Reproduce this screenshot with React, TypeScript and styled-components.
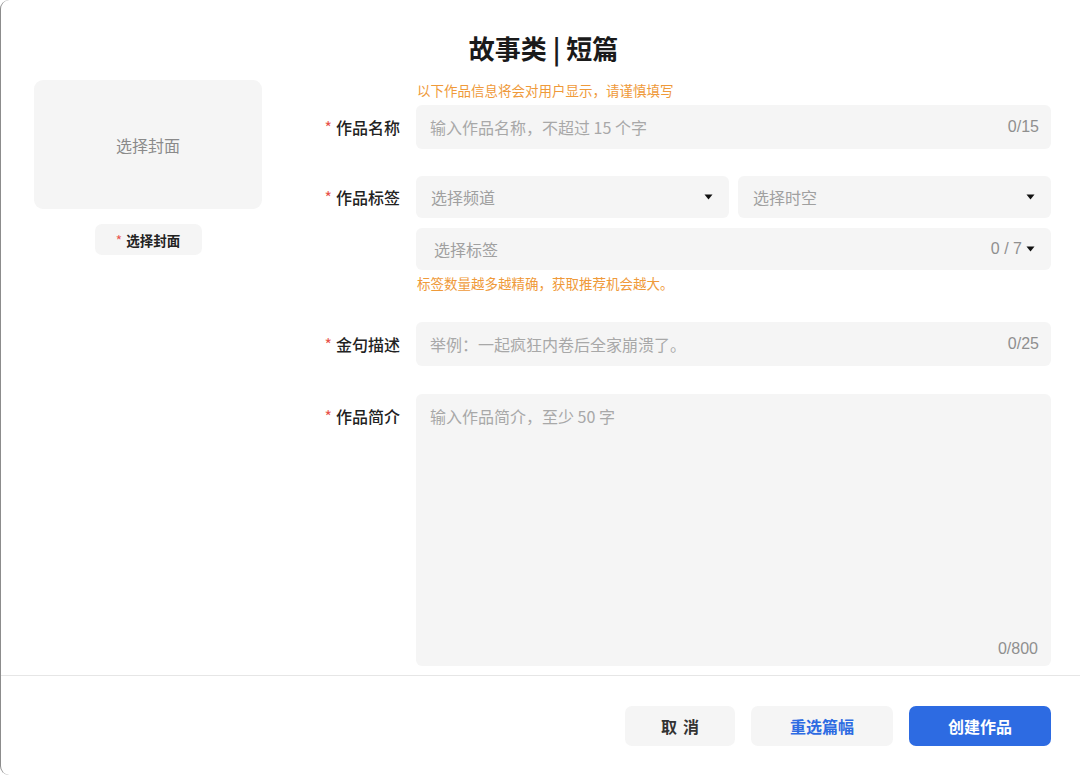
import React from "react";
import styled, { createGlobalStyle } from "styled-components";

const Global = createGlobalStyle`
  html, body { margin: 0; padding: 0; height: 100%; overflow: hidden; background: #fff; }
  body { font-family: "Noto Sans CJK SC", "Noto Sans", "Liberation Sans", sans-serif; color: #222; }
  #root { height: 100%; }
  * { box-sizing: border-box; }
`;

const Modal = styled.div`
  height: 775px;
  width: 1080px;
  background: #fff;
  border-left: 1.5px solid #8c8c8c;
  border-radius: 9px 0 0 9px;
  display: flex;
  flex-direction: column;
`;

const Title = styled.h1`
  margin: 0;
  padding-top: 29px;
  height: 80px;
  text-align: center;
  font-size: 26px;
  line-height: 38px;
  font-weight: 700;
  color: #1a1a1a;
  padding-left: 6px;
`;

const Body = styled.div`
  display: grid;
  grid-template-columns: 228px 1fr;
  padding: 0 29px 0 33px;
  height: 594px;
`;

const CoverCol = styled.div`
  display: flex;
  flex-direction: column;
  align-items: center;
`;

const CoverBox = styled.div`
  width: 228px;
  height: 129px;
  background: #f5f5f5;
  border-radius: 9px;
  display: flex;
  align-items: center;
  justify-content: center;
  font-size: 16px;
  color: #8a8a8a;
`;

const CoverButton = styled.button`
  margin-top: 15px;
  width: 107px;
  height: 31px;
  border: none;
  background: #f5f5f5;
  border-radius: 7px;
  font-family: inherit;
  font-size: 13.5px;
  font-weight: 700;
  color: #222;
  display: flex;
  align-items: center;
  justify-content: center;
  padding: 0;
`;

const Star = styled.span`
  color: #e8534a;
  font-weight: 400;
  margin-right: 4px;
`;

const Form = styled.div`
  display: grid;
  grid-template-columns: 138px 635px;
  column-gap: 16px;
  align-content: start;
`;

const Hint = styled.div<{ $top?: number; $bottom?: number }>`
  grid-column: 2;
  font-size: 13.5px;
  line-height: 18px;
  color: #ef9a3a;
  padding-left: 1px;
  margin-top: ${(p) => p.$top ?? 0}px;
  margin-bottom: ${(p) => p.$bottom ?? 0}px;
`;

const Label = styled.div<{ $top?: number }>`
  grid-column: 1;
  text-align: right;
  font-size: 16px;
  line-height: 44px;
  height: 44px;
  font-weight: 500;
  color: #222;
  margin-top: ${(p) => p.$top ?? 0}px;
`;

const Control = styled.div<{ $top?: number }>`
  grid-column: 2;
  margin-top: ${(p) => p.$top ?? 0}px;
`;

const InputBox = styled.div`
  height: 44px;
  background: #f5f5f5;
  border-radius: 6px;
  display: flex;
  align-items: center;
  padding: 0 12px 0 14px;
`;

const TextInput = styled.input`
  flex: 1;
  border: none;
  outline: none;
  background: transparent;
  font-family: inherit;
  font-size: 16px;
  color: #222;
  padding: 0;
  &::placeholder { color: #a8a8a8; }
`;

const Counter = styled.span`
  font-size: 16px;
  color: #8f8f8f;
  font-family: "Liberation Sans", "Noto Sans", sans-serif;
`;

const SelectRow = styled.div`
  display: grid;
  grid-template-columns: 1fr 1fr;
  gap: 9px;
`;

const Select = styled.div<{ $pad?: number }>`
  height: 42px;
  background: #f5f5f5;
  border-radius: 6px;
  display: flex;
  align-items: center;
  padding: 0 16px 0 ${(p) => p.$pad ?? 15}px;
  font-size: 16px;
  color: #a0a0a0;
  gap: 4px;
`;

const SelectText = styled.span`
  flex: 1;
`;

const TagSelect = styled(Select)`
  margin-top: 10px;
`;

const AreaBox = styled.div`
  height: 272px;
  background: #f5f5f5;
  border-radius: 6px;
  display: flex;
  flex-direction: column;
  padding: 10px 13px 6px 14px;
`;

const TextArea = styled.textarea`
  flex: 1;
  border: none;
  outline: none;
  resize: none;
  background: transparent;
  font-family: inherit;
  font-size: 16px;
  line-height: 24px;
  padding: 0;
  color: #222;
  &::placeholder { color: #a8a8a8; }
`;

const AreaFooter = styled.div`
  display: flex;
  justify-content: flex-end;
  line-height: 22px;
`;

const Divider = styled.div`
  height: 1px;
  background: #e6e6e6;
  margin-top: 1px;
`;

const Footer = styled.div`
  display: flex;
  justify-content: flex-end;
  gap: 16px;
  padding: 30px 29px 0 0;
`;

const Button = styled.button<{ $variant: "plain" | "soft" | "primary"; $w: number }>`
  width: ${(p) => p.$w}px;
  height: 40px;
  border: none;
  border-radius: 7px;
  font-family: inherit;
  font-size: 16px;
  font-weight: 700;
  letter-spacing: ${(p) => (p.$variant === "plain" ? "6px" : "0")};
  text-indent: ${(p) => (p.$variant === "plain" ? "6px" : "0")};
  background: ${(p) => (p.$variant === "primary" ? "#2d6be2" : "#f5f5f5")};
  color: ${(p) => (p.$variant === "primary" ? "#fff" : p.$variant === "soft" ? "#2d6be2" : "#333")};
`;

const Caret = () => (
  <svg width="9" height="6" viewBox="0 0 9 6">
    <path d="M0.5 0.5 H8.5 L4.5 5.5 Z" fill="#111" />
  </svg>
);

const Req: React.FC<{ children: React.ReactNode }> = ({ children }) => (
  <>
    <Star>*</Star>
    {children}
  </>
);

export default function App() {
  return (
    <>
      <Global />
      <Modal>
        <Title>故事类 | 短篇</Title>
        <Body>
          <CoverCol>
            <CoverBox>选择封面</CoverBox>
            <CoverButton>
              <Star>*</Star>选择封面
            </CoverButton>
          </CoverCol>
          <Form>
            <Hint $top={1} $bottom={6}>以下作品信息将会对用户显示，请谨慎填写</Hint>

            <Label><Req>作品名称</Req></Label>
            <Control>
              <InputBox>
                <TextInput placeholder="输入作品名称，不超过 15 个字" />
                <Counter>0/15</Counter>
              </InputBox>
            </Control>

            <Label $top={26}><Req>作品标签</Req></Label>
            <Control $top={27}>
              <SelectRow>
                <Select>
                  <SelectText>选择频道</SelectText>
                  <Caret />
                </Select>
                <Select>
                  <SelectText>选择时空</SelectText>
                  <Caret />
                </Select>
              </SelectRow>
              <TagSelect $pad={18}>
                <SelectText>选择标签</SelectText>
                <Counter>0 / 7</Counter>
                <Caret />
              </TagSelect>
            </Control>
            <Hint $top={4}>标签数量越多越精确，获取推荐机会越大。</Hint>

            <Label $top={30}><Req>金句描述</Req></Label>
            <Control $top={30}>
              <InputBox>
                <TextInput placeholder="举例：一起疯狂内卷后全家崩溃了。" />
                <Counter>0/25</Counter>
              </InputBox>
            </Control>

            <Label $top={28}><Req>作品简介</Req></Label>
            <Control $top={28}>
              <AreaBox>
                <TextArea placeholder="输入作品简介，至少 50 字" />
                <AreaFooter>
                  <Counter>0/800</Counter>
                </AreaFooter>
              </AreaBox>
            </Control>
          </Form>
        </Body>
        <Divider />
        <Footer>
          <Button $variant="plain" $w={110}>取消</Button>
          <Button $variant="soft" $w={142}>重选篇幅</Button>
          <Button $variant="primary" $w={142}>创建作品</Button>
        </Footer>
      </Modal>
    </>
  );
}
